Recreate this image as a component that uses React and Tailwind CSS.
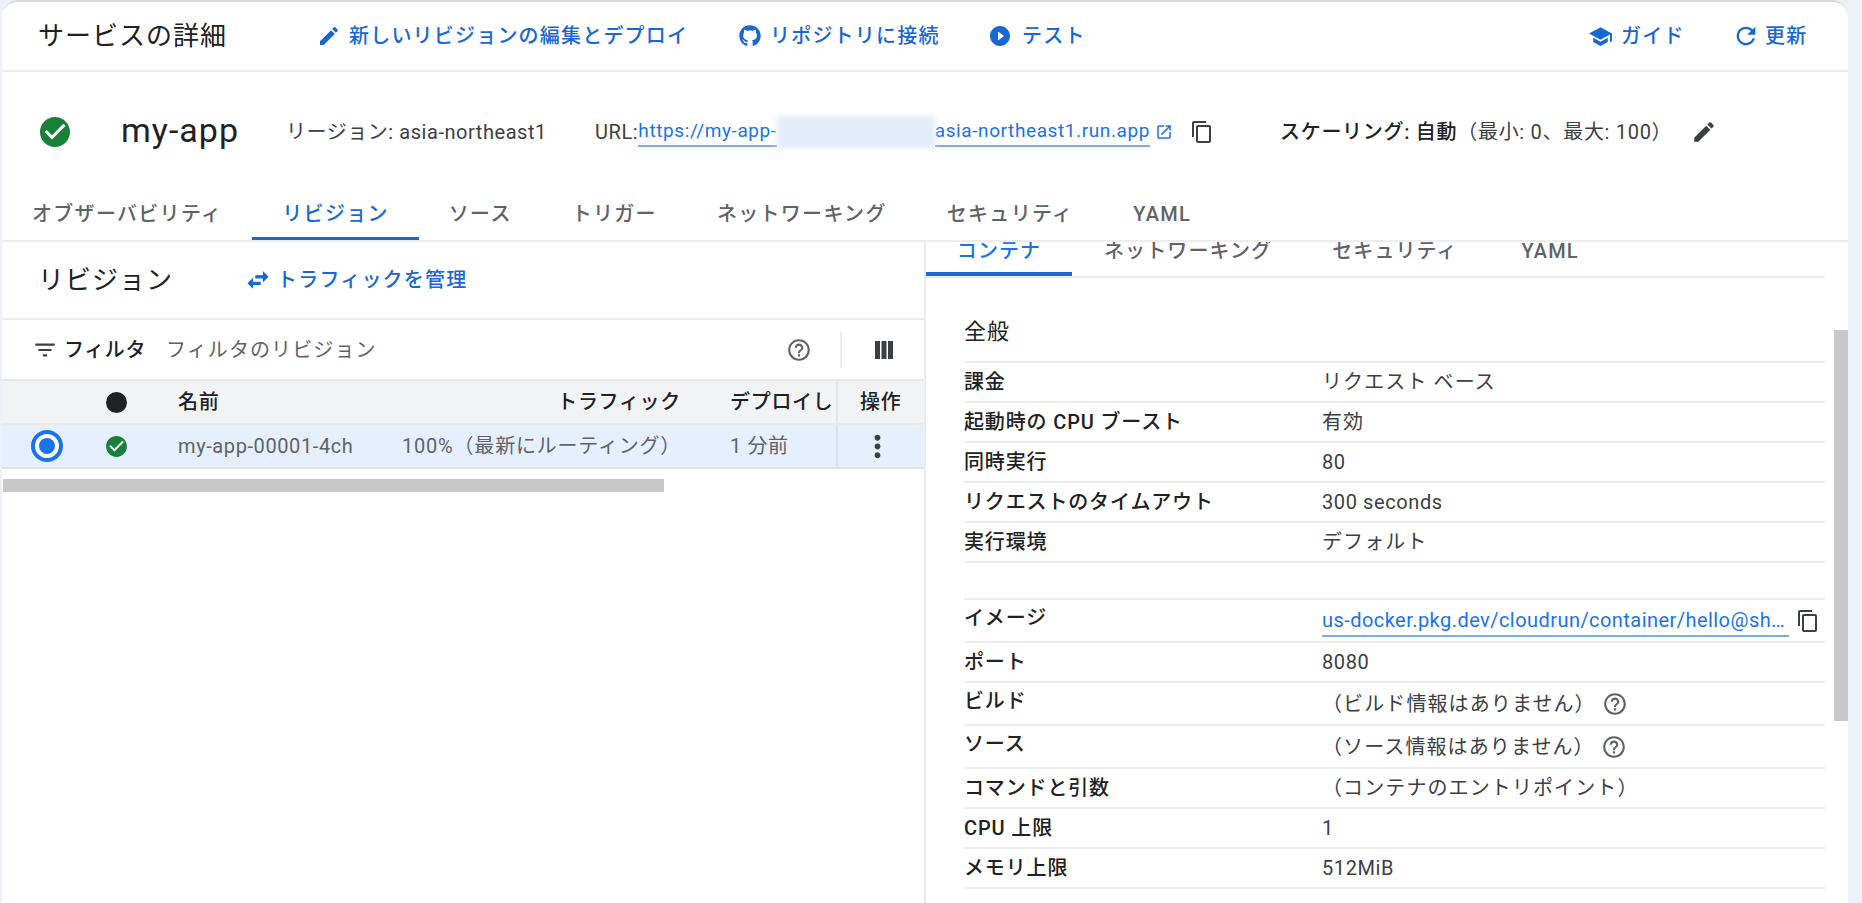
import React from "react";
import { FaGithub } from "react-icons/fa";

const Icon = ({ d, className }) => (
  <svg viewBox="0 0 24 24" fill="currentColor" className={className}>
    <path d={d} />
  </svg>
);

const EDIT = "M3 17.25V21h3.75L17.81 9.94l-3.75-3.75L3 17.25zM20.71 7.04c.39-.39.39-1.02 0-1.41l-2.34-2.34c-.39-.39-1.02-.39-1.41 0l-1.83 1.83 3.75 3.75 1.83-1.83z";
const PLAY = "M12 2C6.48 2 2 6.48 2 12s4.48 10 10 10 10-4.48 10-10S17.52 2 12 2zm-2 14.5v-9l6 4.5-6 4.5z";
const SCHOOL = "M5 13.18v4L12 21l7-3.82v-4L12 17l-7-3.82zM12 3L1 9l11 6 9-4.91V17h2V9L12 3z";
const REFRESH = "M17.65 6.35C16.2 4.9 14.21 4 12 4c-4.42 0-7.99 3.58-7.99 8s3.57 8 7.99 8c3.73 0 6.84-2.55 7.73-6h-2.08c-.82 2.33-3.04 4-5.65 4-3.31 0-6-2.69-6-6s2.69-6 6-6c1.66 0 3.14.69 4.22 1.78L13 11h7V4l-2.35 2.35z";
const CHECK = "M12 2C6.48 2 2 6.48 2 12s4.48 10 10 10 10-4.48 10-10S17.52 2 12 2zm-2 15l-5-5 1.41-1.41L10 14.17l7.59-7.59L19 8l-9 9z";
const OPEN = "M19 19H5V5h7V3H5c-1.11 0-2 .9-2 2v14c0 1.1.89 2 2 2h14c1.1 0 2-.9 2-2v-7h-2v7zM14 3v2h3.59l-9.83 9.83 1.41 1.41L19 6.41V10h2V3h-7z";
const COPY = "M16 1H4c-1.1 0-2 .9-2 2v14h2V3h12V1zm3 4H8c-1.1 0-2 .9-2 2v14c0 1.1.9 2 2 2h11c1.1 0 2-.9 2-2V7c0-1.1-.9-2-2-2zm0 16H8V7h11v14z";
const SWAP = "M6.99 11L3 15l3.99 4v-3H14v-2H6.99v-3zM21 9l-3.99-4v3H10v2h7.01v3L21 9z";
const FILTER = "M10 18h4v-2h-4v2zM3 6v2h18V6H3zm3 7h12v-2H6v2z";
const HELP = "M11 18h2v-2h-2v2zm1-16C6.48 2 2 6.48 2 12s4.48 10 10 10 10-4.48 10-10S17.52 2 12 2zm0 18c-4.41 0-8-3.59-8-8s3.59-8 8-8 8 3.59 8 8-3.59 8-8 8zm0-14c-2.21 0-4 1.79-4 4h2c0-1.1.9-2 2-2s2 .9 2 2c0 2-3 1.75-3 5h2c0-2.25 3-2.5 3-5 0-2.21-1.79-4-4-4z";
const COLUMNS = "M3 3h5v18H3zM9.5 3h5v18h-5zM16 3h5v18h-5z";
const MORE = "M12 8c1.1 0 2-.9 2-2s-.9-2-2-2-2 .9-2 2 .9 2 2 2zm0 2c-1.1 0-2 .9-2 2s.9 2 2 2 2-.9 2-2-.9-2-2-2zm0 6c-1.1 0-2 .9-2 2s.9 2 2 2 2-.9 2-2-.9-2-2-2z";

const HeaderAction = ({ icon, label, className }) => (
  <div className={`flex items-center text-[#1967d2] ${className}`}>
    {icon}
    <span className="text-[20px] font-medium tracking-[1.2px] whitespace-nowrap">{label}</span>
  </div>
);

const Tab = ({ label, active }) => (
  <div
    className={`h-[42px] pb-[8px] px-[30px] flex items-center text-[20px] tracking-[1.3px] font-medium whitespace-nowrap border-b-[3px] ${
      active ? "border-[#1967d2] text-[#1967d2]" : "border-transparent text-[#5f6368]"
    }`}
  >
    {label}
  </div>
);

const DetailRow = ({ label, children, tall }) => (
  <div className={`flex border-b-2 border-[#eceded] items-center ${tall ? "h-[43px]" : "h-[40px]"}`}>
    <div className={`w-[358px] shrink-0 text-[20px] font-medium tracking-[0.85px] text-[#202124] whitespace-nowrap ${tall ? "pb-[5px]" : ""}`}>{label}</div>
    <div className="flex-1 min-w-0 flex items-center text-[20px] tracking-[0.6px] text-[#3c4043] whitespace-nowrap">{children}</div>
  </div>
);

const Jp = ({ children }) => <span className="tracking-[1.1px]">{children}</span>;

const SmallTab = ({ children, className }) => (
  <span className={`h-[36px] flex items-center pb-[15px] text-[20px] font-medium tracking-[1.1px] text-[#5f6368] whitespace-nowrap ${className}`}>
    {children}
  </span>
);

export default function App() {
  return (
    <div className="h-[903px] w-full bg-[#edf2fa] overflow-hidden font-['Roboto','Noto_Sans_CJK_JP',sans-serif]">
      <div className="h-full ml-[2px] mr-[14px] bg-white rounded-t-2xl border-t-2 border-[#d9dadc] flex flex-col">
        {/* header bar */}
        <div className="h-[70px] shrink-0 flex items-center border-b-2 border-[#ececec]">
          <div className="ml-[36px] w-[276px] text-[26px] tracking-[1px] text-[#202124] whitespace-nowrap">サービスの詳細</div>
          <HeaderAction
            className="w-[424px]"
            icon={<Icon d={EDIT} className="w-[24px] h-[24px] mr-[8px] ml-[3px]" />}
            label="新しいリビジョンの編集とデプロイ"
          />
          <HeaderAction
            className="w-[250px]"
            icon={<FaGithub className="w-[22px] h-[22px] mr-[9px] ml-[1px]" />}
            label="リポジトリに接続"
          />
          <HeaderAction
            className="w-[600px]"
            icon={<Icon d={PLAY} className="w-[24px] h-[24px] mr-[10px]" />}
            label="テスト"
          />
          <HeaderAction
            className="w-[144px]"
            icon={<Icon d={SCHOOL} className="w-[25px] h-[25px] mr-[8px]" />}
            label="ガイド"
          />
          <HeaderAction
            icon={<Icon d={REFRESH} className="w-[28px] h-[28px] mr-[5px]" />}
            label="更新"
          />
        </div>

        {/* service summary */}
        <div className="h-[120px] shrink-0 flex items-center">
          <Icon d={CHECK} className="ml-[35px] w-[36px] h-[36px] text-[#188038]" />
          <div className="ml-[48px] w-[165px] text-[34px] tracking-[1px] text-[#202124] leading-none pb-[4px]">my-app</div>
          <div className="w-[309px] text-[20px] tracking-[0.55px] text-[#3c4043] whitespace-nowrap">リージョン: asia-northeast1</div>
          <div className="flex items-center text-[19px] tracking-[0.6px] whitespace-nowrap">
            <span className="text-[20px] text-[#3c4043]">URL:</span>
            <span className="text-[#1a73e8] border-b-2 border-[#7baaf0] h-[30px] flex items-center">https://my-app-</span>
            <span className="w-[158px] h-[32px] bg-[#e2ecfa] blur-[3px]" />
            <span className="text-[#1a73e8] border-b-2 border-[#7baaf0] h-[30px] flex items-center">asia-northeast1.run.app</span>
          </div>
          <Icon d={OPEN} className="ml-[5px] w-[18px] h-[18px] text-[#1a73e8]" />
          <Icon d={COPY} className="ml-[17px] w-[24px] h-[24px] text-[#3c4043]" />
          <div className="ml-[66px] flex items-center text-[20px] font-medium tracking-[0.7px] text-[#202124] whitespace-nowrap">
            スケーリング: 自動<span className="font-normal text-[#3c4043]">（最小: 0、最大: 100）</span>
          </div>
          <Icon d={EDIT} className="ml-[19px] w-[26px] h-[26px] text-[#3c4043]" />
        </div>

        {/* main tabs */}
        <div className="h-[50px] shrink-0 flex items-end border-b-2 border-[#ececec]">
          <Tab label="オブザーバビリティ" />
          <Tab label="リビジョン" active />
          <Tab label="ソース" />
          <Tab label="トリガー" />
          <Tab label="ネットワーキング" />
          <Tab label="セキュリティ" />
          <Tab label="YAML" />
        </div>

        <div className="flex-1 flex min-h-0">
          {/* revisions list */}
          <div className="w-[924px] shrink-0 border-r-2 border-[#ececec]">
            <div className="h-[78px] flex items-center border-b-2 border-[#ececec]">
              <div className="ml-[36px] w-[207px] text-[26px] tracking-[1px] text-[#202124]">リビジョン</div>
              <HeaderAction
                icon={<Icon d={SWAP} className="w-[26px] h-[26px] mr-[6px] stroke-current stroke-1" />}
                label="トラフィックを管理"
              />
            </div>
            <div className="h-[59px] flex items-center">
              <Icon d={FILTER} className="ml-[30px] w-[26px] h-[26px] text-[#3c4043]" />
              <span className="ml-[6px] text-[20px] font-medium tracking-[0.6px] text-[#202124]">フィルタ</span>
              <span className="ml-[20px] w-[620px] text-[20px] tracking-[1.1px] text-[#5f6368]">フィルタのリビジョン</span>
              <Icon d={HELP} className="w-[26px] h-[26px] text-[#5f6368]" />
              <div className="ml-[28px] h-[36px] border-l-2 border-[#ececec]" />
              <Icon d={COLUMNS} className="ml-[30px] w-[24px] h-[24px] text-[#3c4043]" />
            </div>
            <div className="h-[46px] flex items-center bg-[#f1f3f4] border-y-2 border-[#e8eaed] text-[20px] font-medium tracking-[0.7px] text-[#202124]">
              <div className="w-[104px]" />
              <div className="w-[72px]">
                <div className="w-[21px] h-[21px] rounded-full bg-[#202124]" />
              </div>
              <div className="w-[224px]">名前</div>
              <div className="w-[279px] text-right">トラフィック</div>
              <div className="ml-[49px] w-[106px] overflow-hidden whitespace-nowrap">デプロイし</div>
              <div className="h-full pl-[22px] border-l-2 border-[#e3e5e8] flex items-center">操作</div>
            </div>
            <div className="h-[44px] flex items-center bg-[#e6effd] border-b-2 border-[#dde3ec] text-[20px] tracking-[0.6px] text-[#5f6368]">
              <div className="ml-[29px] w-[32px] h-[32px] rounded-full border-[4px] border-[#1a73e8] flex items-center justify-center bg-white">
                <div className="w-[16px] h-[16px] rounded-full bg-[#1a73e8]" />
              </div>
              <div className="ml-[43px] w-[72px]">
                <Icon d={CHECK} className="w-[25px] h-[25px] -ml-[2px] text-[#188038]" />
              </div>
              <div className="w-[224px] whitespace-nowrap">my-app-00001-4ch</div>
              <div className="w-[328px] whitespace-nowrap tracking-[0.8px]">100%（最新にルーティング）</div>
              <div className="w-[106px] whitespace-nowrap">1 分前</div>
              <div className="h-full w-[88px] border-l-2 border-[#dde3ec] flex items-center justify-center pr-[8px]">
                <Icon d={MORE} className="w-[35px] h-[35px] text-[#3c4043]" />
              </div>
            </div>
            <div className="mt-[10px] ml-px w-[661px] h-[13px] bg-[#c8c8c8]" />
          </div>

          {/* revision details */}
          <div className="flex-1 min-w-0 flex overflow-hidden">
            <div className="flex-1 min-w-0">
              <div className="h-[36px] flex items-end border-b-2 border-[#ececec] overflow-hidden">
                <div className="h-[36px] w-[146px] shrink-0 pb-[11px] flex items-center justify-center border-b-[4px] border-[#1967d2] text-[20px] font-medium tracking-[1.1px] text-[#1a73e8] whitespace-nowrap">
                  コンテナ
                </div>
                <SmallTab className="ml-[32px]">ネットワーキング</SmallTab>
                <SmallTab className="ml-[60px]">セキュリティ</SmallTab>
                <SmallTab className="ml-[64px]">YAML</SmallTab>
              </div>
              <div className="pl-[38px]">
                <div className="h-[85px] flex items-end pb-[13px] text-[22px] tracking-[1px] text-[#202124] border-b-2 border-[#eceded]">全般</div>
                <DetailRow label="課金"><Jp>リクエスト ベース</Jp></DetailRow>
                <DetailRow label="起動時の CPU ブースト"><Jp>有効</Jp></DetailRow>
                <DetailRow label="同時実行">80</DetailRow>
                <DetailRow label="リクエストのタイムアウト">300 seconds</DetailRow>
                <DetailRow label="実行環境"><Jp>デフォルト</Jp></DetailRow>
                <div className="h-[37px] border-b-2 border-[#eceded]" />
                <DetailRow label="イメージ" tall>
                  <span className="w-[467px] text-[#1a73e8] border-b-2 border-[#7baaf0] truncate tracking-[0.45px]">us-docker.pkg.dev/cloudrun/container/hello@sha256:abc</span>
                  <Icon d={COPY} className="ml-[7px] w-[24px] h-[24px] text-[#3c4043]" />
                </DetailRow>
                <DetailRow label="ポート">8080</DetailRow>
                <DetailRow label="ビルド" tall>
                  <Jp>（ビルド情報はありません）</Jp>
                  <Icon d={HELP} className="ml-[6px] w-[26px] h-[26px] text-[#5f6368]" />
                </DetailRow>
                <DetailRow label="ソース" tall>
                  <Jp>（ソース情報はありません）</Jp>
                  <Icon d={HELP} className="ml-[6px] w-[26px] h-[26px] text-[#5f6368]" />
                </DetailRow>
                <DetailRow label="コマンドと引数"><Jp>（コンテナのエントリポイント）</Jp></DetailRow>
                <DetailRow label="CPU 上限">1</DetailRow>
                <DetailRow label="メモリ上限">512MiB</DetailRow>
              </div>
            </div>
            <div className="w-[23px] shrink-0 pl-[9px] pt-[88px]">
              <div className="w-[14px] h-[391px] bg-[#c8c8c8]" />
            </div>
          </div>
        </div>
      </div>
    </div>
  );
}
